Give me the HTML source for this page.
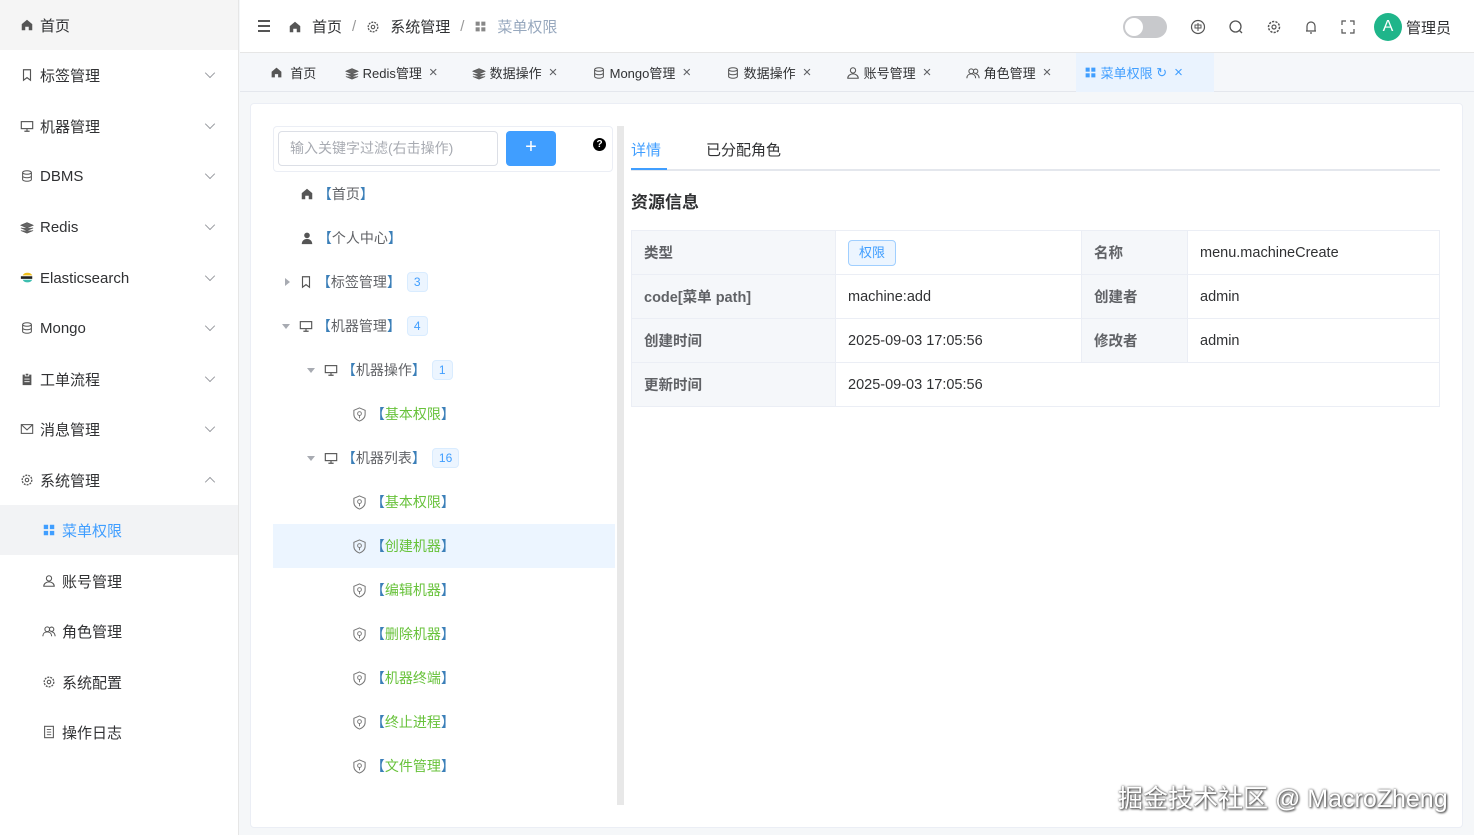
<!DOCTYPE html>
<html><head><meta charset="utf-8"><style>
*{box-sizing:border-box;margin:0;padding:0}
body{width:1474px;height:835px;overflow:hidden;background:#f5f7f9;font-family:"Liberation Sans","Noto Sans CJK SC",sans-serif;font-size:14px;color:#303133;position:relative}
.abs{position:absolute}
.side{left:0;top:0;width:239px;height:835px;background:#fff;border-right:1px solid #e6e6e6}
.mi{position:absolute;left:0;width:238px;height:50px;display:flex;align-items:center;padding-left:20px;font-size:15px;color:#303133}
.mi svg.ic{width:14px;height:14px;margin-right:6px}
.mi .ar{position:absolute;right:24px;top:19px;width:8px;height:8px;border-right:1px solid #909399;border-bottom:1px solid #909399;transform:rotate(45deg) scale(.9)}
.mi .up{transform:rotate(-135deg) scale(.9);top:23px}
.sub{padding-left:42px}
.hdr{left:240px;top:0;width:1234px;height:53px;background:#fff;border-bottom:1px solid #e6e6e6}
.tabs{left:240px;top:53px;width:1234px;height:39px;background:#f5f7fa;border-bottom:1px solid #e4e7ed}
.tab{position:absolute;top:0;height:39px;display:flex;align-items:center;font-size:13px;color:#303133;padding:0 8px}
.tab .x{margin-left:7px;color:#606266;font-size:15px}
.card{left:250px;top:103px;width:1213px;height:725px;background:#fff;border:1px solid #ebeef5;border-radius:4px}
.row{position:absolute;left:273px;width:342px;height:44px;display:flex;align-items:center;font-size:14px;color:#606266}
.bk{color:#3b7fb8}
.g{color:#67c23a}
.badge{display:inline-block;margin-left:6px;background:#ecf5ff;border:1px solid #d9ecff;color:#409eff;font-size:12px;border-radius:4px;padding:0 6px;height:20px;line-height:19px}
.tri{width:0;height:0;border-left:4px solid transparent;border-right:4px solid transparent;border-top:5px solid #a8abb2;margin-right:9px}
.trir{width:0;height:0;border-top:4px solid transparent;border-bottom:4px solid transparent;border-left:5px solid #a8abb2;margin-right:9px;margin-left:2px}
table{border-collapse:collapse;position:absolute;left:631px;top:230px;width:809px;font-size:14.5px}
td{border:1px solid #ebeef5;height:44px;padding:0 12px;color:#303133}
td.l{background:#f5f7fa;font-weight:bold;color:#606266}
</style></head><body>

<div class="abs side">
 <div class="mi" style="top:0;background:#f5f5f5"><svg class="ic" viewBox="0 0 16 16"><path d="M8 2L2 7v7h4v-4h4v4h4V7z" fill="#555"/></svg>首页</div>
 <div class="mi" style="top:50px"><svg class="ic" viewBox="0 0 16 16"><path d="M4 2h8v12l-4-3-4 3z" fill="none" stroke="#555" stroke-width="1.3"/></svg>标签管理<i class="ar"></i></div>
 <div class="mi" style="top:101px"><svg class="ic" viewBox="0 0 16 16"><rect x="1.5" y="3" width="13" height="8" fill="none" stroke="#555" stroke-width="1.3"/><path d="M5 14h6M8 11v3" stroke="#555" stroke-width="1.3"/></svg>机器管理<i class="ar"></i></div>
 <div class="mi" style="top:151px"><svg class="ic" viewBox="0 0 16 16"><ellipse cx="8" cy="4" rx="5" ry="2" fill="none" stroke="#555" stroke-width="1.2"/><path d="M3 4v8c0 1 2 2 5 2s5-1 5-2V4M3 8c0 1 2 2 5 2s5-1 5-2" fill="none" stroke="#555" stroke-width="1.2"/></svg>DBMS<i class="ar"></i></div>
 <div class="mi" style="top:202px"><svg class="ic" viewBox="0 0 16 16"><path d="M1 6l7-3 7 3-7 3zM1 9l7 3 7-3M1 12l7 3 7-3" fill="#666" stroke="#555" stroke-width=".8"/></svg>Redis<i class="ar"></i></div>
 <div class="mi" style="top:253px"><svg class="ic" viewBox="0 0 16 16"><path d="M3 5a6 5 0 0 1 11 0z" fill="#f0bf1a"/><rect x="1" y="6" width="13" height="3" fill="#222"/><path d="M3 10h11a6 5 0 0 1-11 0z" fill="#3ebeb0"/></svg>Elasticsearch<i class="ar"></i></div>
 <div class="mi" style="top:303px"><svg class="ic" viewBox="0 0 16 16"><ellipse cx="8" cy="4" rx="5" ry="2" fill="none" stroke="#555" stroke-width="1.2"/><path d="M3 4v8c0 1 2 2 5 2s5-1 5-2V4M3 8c0 1 2 2 5 2s5-1 5-2" fill="none" stroke="#555" stroke-width="1.2"/></svg>Mongo<i class="ar"></i></div>
 <div class="mi" style="top:354px"><svg class="ic" viewBox="0 0 16 16"><rect x="3" y="3" width="10" height="12" fill="#555"/><rect x="6" y="1.5" width="4" height="3" fill="#555" stroke="#fff"/><path d="M5 8h6M5 11h6" stroke="#fff"/></svg>工单流程<i class="ar"></i></div>
 <div class="mi" style="top:404px"><svg class="ic" viewBox="0 0 16 16"><rect x="1.5" y="3" width="13" height="10" fill="none" stroke="#555" stroke-width="1.2"/><path d="M1.5 3l6.5 6 6.5-6" fill="none" stroke="#555" stroke-width="1.2"/></svg>消息管理<i class="ar"></i></div>
 <div class="mi" style="top:455px"><svg class="ic" viewBox="0 0 16 16"><circle cx="8" cy="8" r="5.5" fill="none" stroke="#555" stroke-width="1.5" stroke-dasharray="2.2 1.2"/><circle cx="8" cy="8" r="2" fill="none" stroke="#555" stroke-width="1.2"/></svg>系统管理<i class="ar up"></i></div>
 <div class="mi sub" style="top:505px;background:#f2f3f5;color:#409eff"><svg class="ic" viewBox="0 0 16 16"><rect x="2" y="2" width="5" height="5" fill="#409eff"/><rect x="9" y="2" width="5" height="5" fill="#409eff"/><rect x="2" y="9" width="5" height="5" fill="#409eff"/><rect x="9" y="9" width="5" height="5" fill="#409eff"/></svg>菜单权限</div>
 <div class="mi sub" style="top:556px"><svg class="ic" viewBox="0 0 16 16"><circle cx="8" cy="5" r="3" fill="none" stroke="#555" stroke-width="1.2"/><path d="M2 14c0-3 3-5 6-5s6 2 6 5z" fill="none" stroke="#555" stroke-width="1.2"/></svg>账号管理</div>
 <div class="mi sub" style="top:606px"><svg class="ic" viewBox="0 0 16 16"><circle cx="6" cy="6" r="2.7" fill="none" stroke="#555" stroke-width="1.2"/><circle cx="11" cy="6" r="2.5" fill="none" stroke="#555" stroke-width="1.2"/><path d="M1 14c0-3 2-5 5-5s5 2 5 5M11 9c2 0 4 2 4 5" fill="none" stroke="#555" stroke-width="1.2"/></svg>角色管理</div>
 <div class="mi sub" style="top:657px"><svg class="ic" viewBox="0 0 16 16"><circle cx="8" cy="8" r="5.5" fill="none" stroke="#555" stroke-width="1.5" stroke-dasharray="2.2 1.2"/><circle cx="8" cy="8" r="2" fill="none" stroke="#555" stroke-width="1.2"/></svg>系统配置</div>
 <div class="mi sub" style="top:707px"><svg class="ic" viewBox="0 0 16 16"><rect x="3" y="1.5" width="10" height="13" fill="none" stroke="#555" stroke-width="1.2"/><path d="M5.5 5h5M5.5 8h5M5.5 11h5" stroke="#555"/></svg>操作日志</div>
</div>

<div class="abs hdr">
 <div class="abs" style="left:18px;top:20px;width:12px;height:12px;border-top:2px solid #555;border-bottom:2px solid #555"><div style="margin-top:3px;height:2px;background:#555"></div></div>
 <div class="abs" style="left:48px;top:16px;font-size:15px;color:#303133;display:flex;align-items:center">
  <svg width="14" height="14" viewBox="0 0 16 16"><path d="M8 2L2 7v7h4v-4h4v4h4V7z" fill="#555"/></svg>
  <span style="margin-left:10px">首页</span><span style="margin:0 10px;color:#999">/</span>
  <svg width="14" height="14" viewBox="0 0 16 16"><circle cx="8" cy="8" r="5.5" fill="none" stroke="#555" stroke-width="1.5" stroke-dasharray="2.2 1.2"/><circle cx="8" cy="8" r="2" fill="none" stroke="#555" stroke-width="1.2"/></svg>
  <span style="margin-left:10px">系统管理</span><span style="margin:0 10px;color:#999">/</span>
  <svg width="13" height="13" viewBox="0 0 16 16"><rect x="2" y="2" width="5" height="5" fill="#888"/><rect x="9" y="2" width="5" height="5" fill="#888"/><rect x="2" y="9" width="5" height="5" fill="#888"/><rect x="9" y="9" width="5" height="5" fill="#888"/></svg>
  <span style="margin-left:10px;color:#97a8be">菜单权限</span>
 </div>
 <div class="abs" style="left:883px;top:16px;width:44px;height:22px;border-radius:11px;background:#c8c9cc"><div style="position:absolute;left:2px;top:2px;width:18px;height:18px;border-radius:50%;background:#fff"></div></div>
 <svg class="abs" style="left:950px;top:19px" width="16" height="16" viewBox="0 0 16 16"><circle cx="8" cy="8" r="6.5" fill="none" stroke="#555" stroke-width="1.2"/><path d="M5 6h6v3H5zM8 4v8" fill="none" stroke="#555"/></svg>
 <svg class="abs" style="left:988px;top:19px" width="16" height="16" viewBox="0 0 16 16"><circle cx="7.5" cy="7.5" r="5.5" fill="none" stroke="#555" stroke-width="1.3"/><path d="M11.5 11.5l2.5 2.5" stroke="#555" stroke-width="1.3"/></svg>
 <svg class="abs" style="left:1026px;top:19px" width="16" height="16" viewBox="0 0 16 16"><circle cx="8" cy="8" r="5.5" fill="none" stroke="#555" stroke-width="1.5" stroke-dasharray="2.2 1.2"/><circle cx="8" cy="8" r="2" fill="none" stroke="#555" stroke-width="1.2"/></svg>
 <svg class="abs" style="left:1063px;top:19px" width="16" height="16" viewBox="0 0 16 16"><path d="M4 12V7a4 4 0 0 1 8 0v5zM3 12h10M7 14h2" fill="none" stroke="#555" stroke-width="1.2"/></svg>
 <svg class="abs" style="left:1100px;top:19px" width="16" height="16" viewBox="0 0 16 16"><path d="M2 6V2h4M10 2h4v4M14 10v4h-4M6 14H2v-4" fill="none" stroke="#555" stroke-width="1.2"/></svg>
 <div class="abs" style="left:1134px;top:13px;width:28px;height:28px;border-radius:50%;background:#1fb58a;color:#fff;text-align:center;line-height:28px;font-size:16px">A</div>
 <div class="abs" style="left:1166px;top:17px;font-size:15px">管理员</div>
</div>

<div class="abs tabs">
 <div class="tab" style="left:22px"><svg width="13" height="13" viewBox="0 0 16 16"><path d="M8 2L2 7v7h4v-4h4v4h4V7z" fill="#555"/></svg>&nbsp;&nbsp;首页</div>
 <div class="tab" style="left:97px"><svg width="14" height="14" viewBox="0 0 16 16"><path d="M1 6l7-3 7 3-7 3zM1 9l7 3 7-3M1 12l7 3 7-3" fill="#666" stroke="#555" stroke-width=".8"/></svg>&nbsp;Redis管理<span class="x">×</span></div>
 <div class="tab" style="left:224px"><svg width="14" height="14" viewBox="0 0 16 16"><path d="M1 6l7-3 7 3-7 3zM1 9l7 3 7-3M1 12l7 3 7-3" fill="#666" stroke="#555" stroke-width=".8"/></svg>&nbsp;数据操作<span class="x">×</span></div>
 <div class="tab" style="left:344px"><svg width="14" height="14" viewBox="0 0 16 16"><ellipse cx="8" cy="4" rx="5" ry="2" fill="none" stroke="#555" stroke-width="1.2"/><path d="M3 4v8c0 1 2 2 5 2s5-1 5-2V4M3 8c0 1 2 2 5 2s5-1 5-2" fill="none" stroke="#555" stroke-width="1.2"/></svg>&nbsp;Mongo管理<span class="x">×</span></div>
 <div class="tab" style="left:478px"><svg width="14" height="14" viewBox="0 0 16 16"><ellipse cx="8" cy="4" rx="5" ry="2" fill="none" stroke="#555" stroke-width="1.2"/><path d="M3 4v8c0 1 2 2 5 2s5-1 5-2V4M3 8c0 1 2 2 5 2s5-1 5-2" fill="none" stroke="#555" stroke-width="1.2"/></svg>&nbsp;数据操作<span class="x">×</span></div>
 <div class="tab" style="left:598px"><svg width="14" height="14" viewBox="0 0 16 16"><circle cx="8" cy="5" r="3" fill="none" stroke="#555" stroke-width="1.2"/><path d="M2 14c0-3 3-5 6-5s6 2 6 5z" fill="none" stroke="#555" stroke-width="1.2"/></svg>&nbsp;账号管理<span class="x">×</span></div>
 <div class="tab" style="left:718px"><svg width="14" height="14" viewBox="0 0 16 16"><circle cx="6" cy="6" r="2.7" fill="none" stroke="#555" stroke-width="1.2"/><circle cx="11" cy="6" r="2.5" fill="none" stroke="#555" stroke-width="1.2"/><path d="M1 14c0-3 2-5 5-5s5 2 5 5M11 9c2 0 4 2 4 5" fill="none" stroke="#555" stroke-width="1.2"/></svg>&nbsp;角色管理<span class="x">×</span></div>
 <div class="tab" style="left:836px;width:138px;background:#eaf3fe;color:#409eff"><svg width="13" height="13" viewBox="0 0 16 16"><rect x="2" y="2" width="5" height="5" fill="#409eff"/><rect x="9" y="2" width="5" height="5" fill="#409eff"/><rect x="2" y="9" width="5" height="5" fill="#409eff"/><rect x="9" y="9" width="5" height="5" fill="#409eff"/></svg>&nbsp;菜单权限&nbsp;<span style="color:#409eff">↻</span><span class="x" style="color:#409eff">×</span></div>
</div>

<div class="abs card"></div>
<div class="abs" style="left:273px;top:126px;width:340px;height:46px;border:1px solid #ebeef5;border-radius:4px"></div>
<div class="abs" style="left:278px;top:131px;width:220px;height:35px;border:1px solid #dcdfe6;border-radius:4px;color:#a8abb2;font-size:14px;line-height:33px;padding-left:11px">输入关键字过滤(右击操作)</div>
<div class="abs" style="left:506px;top:131px;width:50px;height:35px;background:#409eff;border-radius:4px;color:#fff;text-align:center;line-height:33px;font-size:20px">+</div>
<div class="abs" style="left:593px;top:138px;width:13px;height:13px;border-radius:50%;background:#000;color:#fff;font-size:10px;font-weight:bold;text-align:center;line-height:13px">?</div>
<div class="abs" style="left:617px;top:126px;width:7px;height:679px;background:#e8e8e8"></div>

<div class="row" style="top:172px;padding-left:27px"><svg width="14" height="14" viewBox="0 0 16 16"><path d="M8 2L2 7v7h4v-4h4v4h4V7z" fill="#555"/></svg>&nbsp;<span class="bk">【</span>首页<span class="bk">】</span></div>
<div class="row" style="top:216px;padding-left:27px"><svg width="14" height="14" viewBox="0 0 16 16"><circle cx="8" cy="5" r="3.2" fill="#555"/><path d="M2 15c0-4 3-6 6-6s6 2 6 6z" fill="#555"/></svg>&nbsp;<span class="bk">【</span>个人中心<span class="bk">】</span></div>
<div class="row" style="top:260px;padding-left:10px"><i class="trir"></i><svg width="14" height="14" viewBox="0 0 16 16"><path d="M4 2h8v12l-4-3-4 3z" fill="none" stroke="#555" stroke-width="1.3"/></svg>&nbsp;<span class="bk">【</span>标签管理<span class="bk">】</span><span class="badge">3</span></div>
<div class="row" style="top:304px;padding-left:9px"><i class="tri"></i><svg width="14" height="14" viewBox="0 0 16 16"><rect x="1.5" y="3" width="13" height="8" fill="none" stroke="#555" stroke-width="1.3"/><path d="M5 14h6M8 11v3" stroke="#555" stroke-width="1.3"/></svg>&nbsp;<span class="bk">【</span>机器管理<span class="bk">】</span><span class="badge">4</span></div>
<div class="row" style="top:348px;padding-left:34px"><i class="tri"></i><svg width="14" height="14" viewBox="0 0 16 16"><rect x="1.5" y="3" width="13" height="8" fill="none" stroke="#555" stroke-width="1.3"/><path d="M5 14h6M8 11v3" stroke="#555" stroke-width="1.3"/></svg>&nbsp;<span class="bk">【</span>机器操作<span class="bk">】</span><span class="badge">1</span></div>
<div class="row" style="top:392px;padding-left:79px"><svg width="15" height="15" viewBox="0 0 16 16"><path d="M8 1l6 2.5v4.5c0 3.5-3 6-6 7-3-1-6-3.5-6-7V3.5z" fill="none" stroke="#777" stroke-width="1.1"/><circle cx="8" cy="7" r="2" fill="none" stroke="#777"/><path d="M8 9v3" stroke="#777"/></svg>&nbsp;<span class="bk">【</span><span class="g">基本权限</span><span class="bk">】</span></div>
<div class="row" style="top:436px;padding-left:34px"><i class="tri"></i><svg width="14" height="14" viewBox="0 0 16 16"><rect x="1.5" y="3" width="13" height="8" fill="none" stroke="#555" stroke-width="1.3"/><path d="M5 14h6M8 11v3" stroke="#555" stroke-width="1.3"/></svg>&nbsp;<span class="bk">【</span>机器列表<span class="bk">】</span><span class="badge">16</span></div>
<div class="row" style="top:480px;padding-left:79px"><svg width="15" height="15" viewBox="0 0 16 16"><path d="M8 1l6 2.5v4.5c0 3.5-3 6-6 7-3-1-6-3.5-6-7V3.5z" fill="none" stroke="#777" stroke-width="1.1"/><circle cx="8" cy="7" r="2" fill="none" stroke="#777"/><path d="M8 9v3" stroke="#777"/></svg>&nbsp;<span class="bk">【</span><span class="g">基本权限</span><span class="bk">】</span></div>
<div class="row" style="top:524px;padding-left:79px;background:#ecf5ff"><svg width="15" height="15" viewBox="0 0 16 16"><path d="M8 1l6 2.5v4.5c0 3.5-3 6-6 7-3-1-6-3.5-6-7V3.5z" fill="none" stroke="#777" stroke-width="1.1"/><circle cx="8" cy="7" r="2" fill="none" stroke="#777"/><path d="M8 9v3" stroke="#777"/></svg>&nbsp;<span class="bk">【</span><span class="g">创建机器</span><span class="bk">】</span></div>
<div class="row" style="top:568px;padding-left:79px"><svg width="15" height="15" viewBox="0 0 16 16"><path d="M8 1l6 2.5v4.5c0 3.5-3 6-6 7-3-1-6-3.5-6-7V3.5z" fill="none" stroke="#777" stroke-width="1.1"/><circle cx="8" cy="7" r="2" fill="none" stroke="#777"/><path d="M8 9v3" stroke="#777"/></svg>&nbsp;<span class="bk">【</span><span class="g">编辑机器</span><span class="bk">】</span></div>
<div class="row" style="top:612px;padding-left:79px"><svg width="15" height="15" viewBox="0 0 16 16"><path d="M8 1l6 2.5v4.5c0 3.5-3 6-6 7-3-1-6-3.5-6-7V3.5z" fill="none" stroke="#777" stroke-width="1.1"/><circle cx="8" cy="7" r="2" fill="none" stroke="#777"/><path d="M8 9v3" stroke="#777"/></svg>&nbsp;<span class="bk">【</span><span class="g">删除机器</span><span class="bk">】</span></div>
<div class="row" style="top:656px;padding-left:79px"><svg width="15" height="15" viewBox="0 0 16 16"><path d="M8 1l6 2.5v4.5c0 3.5-3 6-6 7-3-1-6-3.5-6-7V3.5z" fill="none" stroke="#777" stroke-width="1.1"/><circle cx="8" cy="7" r="2" fill="none" stroke="#777"/><path d="M8 9v3" stroke="#777"/></svg>&nbsp;<span class="bk">【</span><span class="g">机器终端</span><span class="bk">】</span></div>
<div class="row" style="top:700px;padding-left:79px"><svg width="15" height="15" viewBox="0 0 16 16"><path d="M8 1l6 2.5v4.5c0 3.5-3 6-6 7-3-1-6-3.5-6-7V3.5z" fill="none" stroke="#777" stroke-width="1.1"/><circle cx="8" cy="7" r="2" fill="none" stroke="#777"/><path d="M8 9v3" stroke="#777"/></svg>&nbsp;<span class="bk">【</span><span class="g">终止进程</span><span class="bk">】</span></div>
<div class="row" style="top:744px;padding-left:79px"><svg width="15" height="15" viewBox="0 0 16 16"><path d="M8 1l6 2.5v4.5c0 3.5-3 6-6 7-3-1-6-3.5-6-7V3.5z" fill="none" stroke="#777" stroke-width="1.1"/><circle cx="8" cy="7" r="2" fill="none" stroke="#777"/><path d="M8 9v3" stroke="#777"/></svg>&nbsp;<span class="bk">【</span><span class="g">文件管理</span><span class="bk">】</span></div>

<div class="abs" style="left:631px;top:139px;font-size:15px;color:#409eff">详情</div>
<div class="abs" style="left:706px;top:139px;font-size:15px;color:#303133">已分配角色</div>
<div class="abs" style="left:631px;top:169px;width:809px;height:2px;background:#e4e7ed"></div>
<div class="abs" style="left:631px;top:168px;width:36px;height:2px;background:#409eff"></div>
<div class="abs" style="left:631px;top:188px;font-size:17px;font-weight:bold;color:#303133">资源信息</div>

<table>
<tr><td class="l" style="width:204px">类型</td><td style="width:246px"><span style="display:inline-block;border:1px solid #a0cfff;background:#ecf5ff;color:#409eff;border-radius:4px;padding:0 10px;height:26px;line-height:24px;font-size:13px">权限</span></td><td class="l" style="width:106px">名称</td><td>menu.machineCreate</td></tr>
<tr><td class="l">code[菜单 path]</td><td>machine:add</td><td class="l">创建者</td><td>admin</td></tr>
<tr><td class="l">创建时间</td><td>2025-09-03 17:05:56</td><td class="l">修改者</td><td>admin</td></tr>
<tr><td class="l">更新时间</td><td colspan="3">2025-09-03 17:05:56</td></tr>
</table>

<div class="abs" style="left:1118px;top:779px;font-size:25px;color:#fff;text-shadow:0 0 2px #555,1px 1px 2px #333;white-space:nowrap">掘金技术社区 @ MacroZheng</div>
</body></html>
